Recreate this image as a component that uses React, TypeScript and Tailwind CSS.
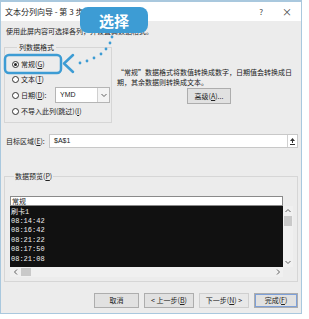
import type React from "react";

const rows = ["刷卡1", "08:14:42", "08:16:42", "08:21:22", "08:17:50", "08:21:08"];

function Radio({ checked }: { checked?: boolean }) {
  return (
    <span className="flex h-[7px] w-[7px] items-center justify-center rounded-full border border-[#333] bg-white">
      {checked && <span className="h-[3px] w-[3px] rounded-full bg-[#222]" />}
    </span>
  );
}

function Btn({
  children,
  className = "",
}: {
  children: React.ReactNode;
  className?: string;
}) {
  return (
    <div
      className={
        "flex h-[15px] items-center justify-center border border-[#adadad] bg-[#e1e1e1] text-[7px] leading-none text-[#222] " +
        className
      }
    >
      {children}
    </div>
  );
}

function Chevron({ dir }: { dir: "up" | "down" | "left" | "right" }) {
  const pts = {
    up: "1.5,5 4,2.5 6.5,5",
    down: "1.5,3 4,5.5 6.5,3",
    left: "5,1.5 2.5,4 5,6.5",
    right: "3,1.5 5.5,4 3,6.5",
  }[dir];
  return (
    <svg width="8" height="8" viewBox="0 0 8 8">
      <polyline points={pts} fill="none" stroke="#606060" strokeWidth="1" />
    </svg>
  );
}

export default function App() {
  return (
    <div className="relative h-[319px] w-[309px] overflow-hidden bg-white font-['Noto_Sans_CJK_SC',sans-serif] text-[#222]">
      {/* dialog */}
      <div className="flex h-[314px] w-[302px] flex-col border border-t-2 border-[#a9c8de]">
        <div className="flex h-[19px] items-center justify-between bg-white pl-[4px] pr-[9px]">
          <span className="text-[8px] leading-none">文本分列向导 - 第 3 步，共 3 步</span>
          <div className="flex items-center gap-[19px] text-[#444]">
            <span className="text-[8px] leading-none">?</span>
            <span className="text-[10px] leading-none">×</span>
          </div>
        </div>

        <div className="flex flex-1 flex-col bg-[#ececec] px-[3px]">
          <p className="mt-[5px] pl-[2px] text-[7px] leading-[10px]">
            使用此屏内容可选择各列，并设置其数据格式。
          </p>

          <div className="mt-[6px] flex">
            <fieldset className="w-[108px] border border-[#d6d6d6] pb-[3px] pl-[7px] pr-[1px] pt-[4px]">
              <legend className="ml-[5px] px-[2px] text-[7px] leading-[10px]">列数据格式</legend>
              <div className="flex h-[16px] items-center gap-[2px] text-[7px]">
                <Radio checked />
                <span>
                  常规(<u>G</u>)
                </span>
              </div>
              <div className="flex h-[15px] items-center gap-[2px] text-[7px]">
                <Radio />
                <span>
                  文本(<u>T</u>)
                </span>
              </div>
              <div className="flex h-[16px] items-center justify-between text-[7px]">
                <div className="flex items-center gap-[2px]">
                  <Radio />
                  <span>
                    日期(<u>D</u>):
                  </span>
                </div>
                <div className="flex h-[16px] w-[55px] items-center justify-between border border-[#b5b5b5] bg-white pl-[4px] text-[7px] font-['Liberation_Sans',sans-serif]">
                  <span>YMD</span>
                  <span className="flex h-full w-[12px] items-center justify-center border-l border-[#d0d0d0] bg-[#f4f4f4]">
                    <Chevron dir="down" />
                  </span>
                </div>
              </div>
              <div className="flex h-[16px] items-center gap-[2px] text-[7px]">
                <Radio />
                <span>
                  不导入此列(跳过)(<u>I</u>)
                </span>
              </div>
            </fieldset>

            <div className="ml-[5px] flex flex-1 flex-col">
              <p className="mt-[25px] text-[7px] leading-[10px]">
                “常规”数据格式将数值转换成数字，日期值会转换成日
                <br />
                期，其余数据则转换成文本。
              </p>
              <Btn className="ml-[70px] mt-[1px] h-[16px] w-[44px]">
                高级(<u>A</u>)...
              </Btn>
            </div>
          </div>

          <div className="mt-[11px] flex h-[14px] items-center">
            <span className="w-[45px] pl-[2px] text-[7px]">
              目标区域(<u>E</u>):
            </span>
            <div className="flex h-[14px] flex-1 items-center justify-between border border-[#c8c8c8] bg-white pl-[4px] text-[7px] font-['Liberation_Sans',sans-serif]">
              <span>$A$1</span>
              <span className="flex h-full w-[10px] items-center justify-center border-l border-[#d0d0d0]">
                <svg width="7" height="9" viewBox="0 0 7 9">
                  <polygon points="3.5,1 6,4 1,4" fill="#333" />
                  <rect x="3" y="4" width="1" height="2" fill="#333" />
                  <rect x="1" y="7" width="5" height="1" fill="#333" />
                </svg>
              </span>
            </div>
          </div>

          <fieldset className="mt-[23px] border border-[#d6d6d6] pb-[4px] pl-[5px] pr-[4px] pt-[15px]">
            <legend className="ml-[4px] px-[1px] text-[7px] leading-[10px]">
              数据预览(<u>P</u>)
            </legend>
            <div className="flex w-[283px] flex-col">
              <div className="flex h-[10px] w-[273px] items-center border border-[#8a8a8a] bg-white pl-[1px] text-[7px] leading-none">
                常规
              </div>
              <div className="flex">
                <div className="h-[61px] w-[273px] bg-[#111] pl-[1px] pt-[1.5px] font-['Liberation_Mono','Noto_Sans_CJK_SC',monospace] text-[7px] leading-[9.4px] text-[#eee]">
                  {rows.map((r) => (
                    <div key={r + Math.random()}>{r}</div>
                  ))}
                </div>
                <div className="flex h-[61px] w-[10px] flex-col items-center bg-[#f0f0f0]">
                  <div className="mt-[1px]">
                    <Chevron dir="up" />
                  </div>
                  <div className="mt-[1px] h-[10px] w-[8px] bg-[#c9c9c9]" />
                  <div className="mt-auto mb-[1px]">
                    <Chevron dir="down" />
                  </div>
                </div>
              </div>
              <div className="flex h-[10px] w-[273px] items-center bg-[#f0f0f0] pl-[2px] pr-[1px]">
                <Chevron dir="left" />
                <div className="ml-[1px] h-[8px] w-[10px] bg-[#c9c9c9]" />
                <div className="ml-auto">
                  <Chevron dir="right" />
                </div>
              </div>
            </div>
          </fieldset>

          <div className="mt-[11px] flex justify-end gap-[5px]">
            <Btn className="w-[45px]">取消</Btn>
            <Btn className="w-[50px]">
              &lt; 上一步(<u>B</u>)
            </Btn>
            <Btn className="w-[50px] border-[#cfcfcf] bg-[#e8e8e8] text-[#9a9a9a]">
              下一步(<u>N</u>) &gt;
            </Btn>
            <Btn className="w-[44px] border-[#4a73c0] shadow-[inset_0_0_0_1px_#7ea0d8]">
              完成(<u>F</u>)
            </Btn>
          </div>
        </div>
      </div>

      {/* annotation overlay */}
      <svg className="pointer-events-none absolute left-0 top-0" width="309" height="319" viewBox="0 0 309 319">
        <rect x="5" y="55" width="56" height="18" rx="4" fill="none" stroke="#3d9cd4" strokeWidth="2.5" />
        <polyline
          points="73,55 64,63.5 73,72"
          fill="none"
          stroke="#3d9cd4"
          strokeWidth="2.5"
          strokeLinecap="round"
          strokeLinejoin="round"
        />
        {[
          [112, 37],
          [110, 43],
          [106, 49],
          [101, 54],
          [94, 58],
          [87, 61],
          [80, 63],
        ].map(([cx, cy]) => (
          <circle key={cx} cx={cx} cy={cy} r="1.4" fill="#3d9cd4" />
        ))}
      </svg>
      <div className="absolute left-[80px] top-[7px] flex h-[26px] w-[68px] items-center justify-center rounded-[8px] bg-[#3d9cd4] text-[15px] font-bold leading-none text-white">
        选择
      </div>
    </div>
  );
}
